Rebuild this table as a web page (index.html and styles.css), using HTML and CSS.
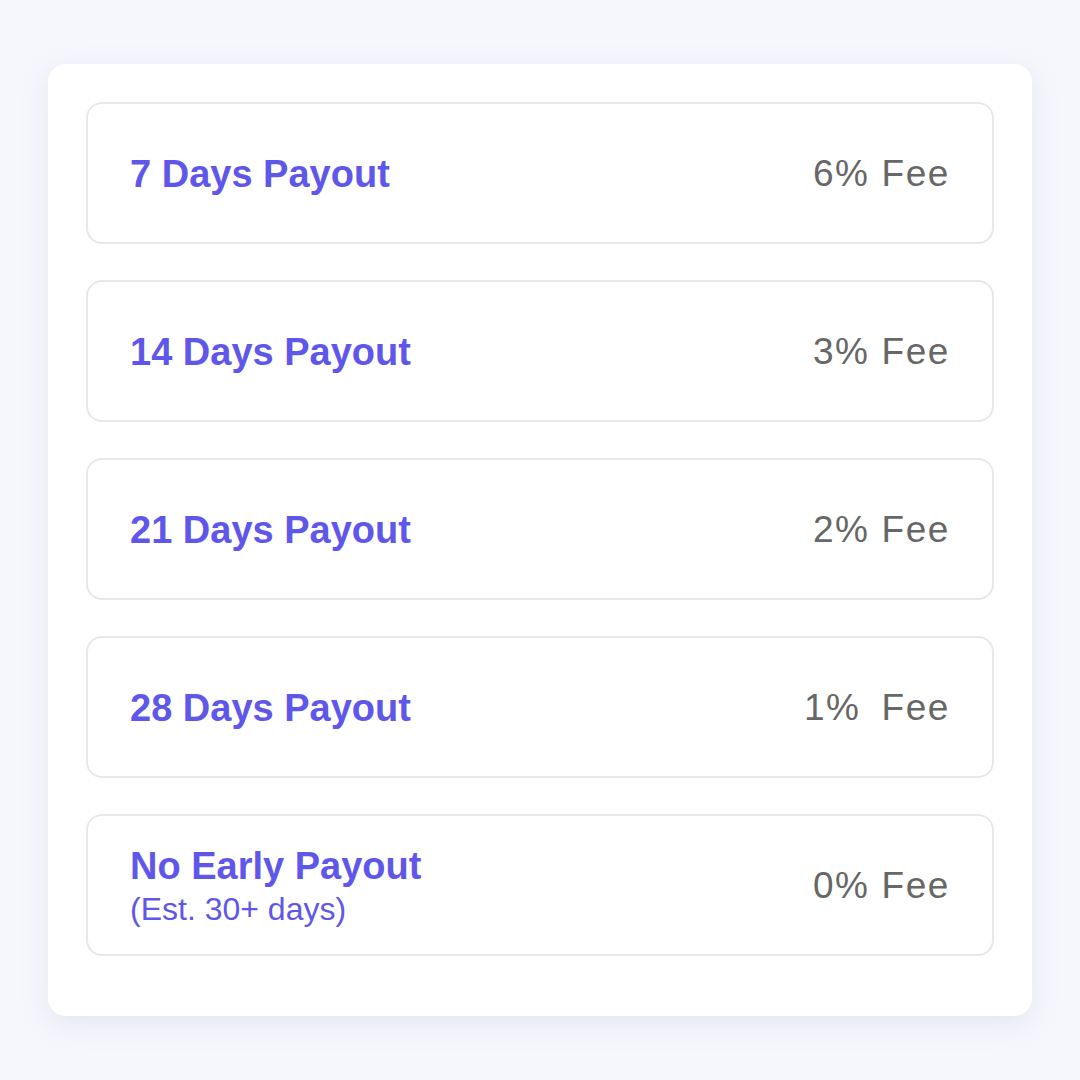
FILE: index.html
```html
<html lang="en">
<head>
    <meta charset="UTF-8">
    <title>Payout Options</title>
    <link rel="stylesheet" href="styles.css">
</head>
<body>
    <div class="card">
        <div class="option">
            <div class="name">7 Days Payout</div>
            <div class="fee">6% Fee</div>
        </div>
        <div class="option">
            <div class="name">14 Days Payout</div>
            <div class="fee">3% Fee</div>
        </div>
        <div class="option">
            <div class="name">21 Days Payout</div>
            <div class="fee">2% Fee</div>
        </div>
        <div class="option">
            <div class="name">28 Days Payout</div>
            <div class="fee">1%&thinsp; Fee</div>
        </div>
        <div class="option">
            <div class="name">
                No Early Payout
                <div class="note">(Est. 30+ days)</div>
            </div>
            <div class="fee">0% Fee</div>
        </div>
    </div>
</body>
</html>
```

FILE: styles.css
```css
/* General */
body {
    margin: 0;
    background-color: #f6f7fc;
    font-family: 'Liberation Sans', Arial, sans-serif;
    height: 1080px;
    padding-top: 64px;
    box-sizing: border-box;
}

.card {
    margin-left: 48px;
    width: 984px;
    height: 952px;
    box-sizing: border-box;
    background: #fff;
    border-radius: 18px;
    padding: 38px 38px 0 38px;
    box-shadow: 0 8px 24px rgba(180, 185, 215, 0.25);
    display: flex;
    flex-direction: column;
    gap: 36px;
}

/* Rows */
.option {
    height: 142px;
    box-sizing: border-box;
    border: 2px solid #e8e8ea;
    border-radius: 16px;
    padding: 2px 44px 0 42px;
    display: flex;
    justify-content: space-between;
    align-items: center;
}

.name {
    color: #5f57ea;
    font-size: 38px;
    font-weight: 700;
    line-height: 42px;
}

.note {
    font-size: 32px;
    font-weight: 400;
    line-height: 36px;
    margin-top: 4px;
}

.fee {
    color: #676767;
    font-size: 37px;
    font-weight: 400;
    letter-spacing: 1.6px;
    margin-right: -2px;
}
```
